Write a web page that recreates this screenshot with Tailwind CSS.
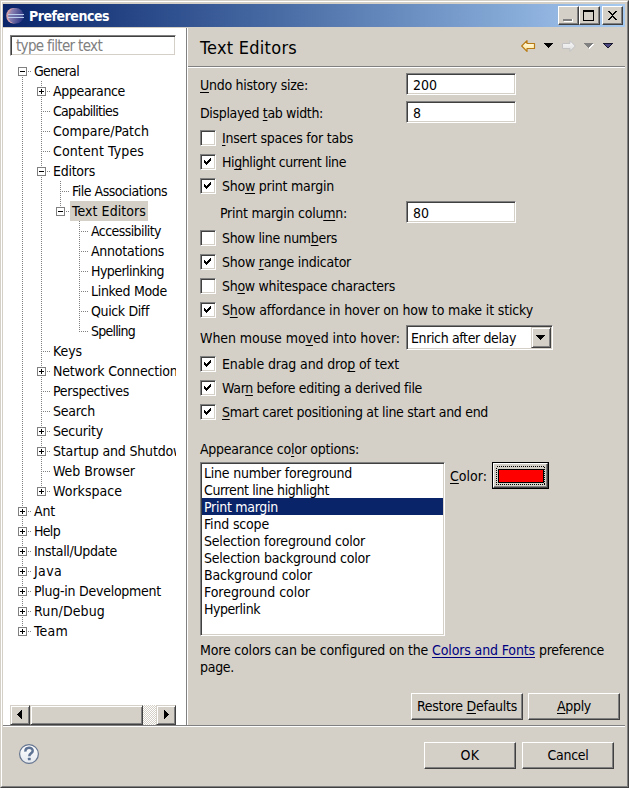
<!DOCTYPE html>
<html lang="en">
<head>
<meta charset="utf-8">
<title>Preferences</title>
<script src="https://cdn.jsdelivr.net/npm/@tailwindcss/browser@4"></script>
</head>
<body class="w-[629px] h-[788px] overflow-hidden bg-[#d4d0c8] text-black text-[14px] leading-[17px] font-['DejaVu_Sans_Condensed','DejaVu_Sans',sans-serif] [font-stretch:condensed]">
<div class="w-[629px] h-[788px] border border-t-[#d4d0c8] border-l-[#d4d0c8] border-r-[#404040] border-b-[#404040]">
<div class="h-full border border-t-white border-l-white border-r-[#808080] border-b-[#808080] pt-[2px] pl-px pr-[2px] flex flex-col">

  <!-- Title bar -->
  <header class="h-[23px] shrink-0 flex items-center bg-linear-to-r from-[#0a246a] to-[#a6caf0] pl-[3px] pr-[2px]">
    <svg width="18" height="18" viewBox="0 0 18 18" class="shrink-0">
      <defs><linearGradient id="ecl" x1="0" y1="0" x2="1" y2="0.3"><stop offset="0" stop-color="#d99a9f"/><stop offset=".3" stop-color="#8a80b0"/><stop offset="1" stop-color="#303a86"/></linearGradient></defs>
      <ellipse cx="7.5" cy="8.7" rx="7.3" ry="7.8" fill="#d3a3ae"/>
      <circle cx="9.8" cy="8.7" r="7.8" fill="url(#ecl)"/>
      <path d="M2 7.5H18M2 10.5H18" stroke="#b9cdee" stroke-width="1.2"/>
      <path d="M2.5 9H17" stroke="#6a72aa" stroke-width="1"/>
    </svg>
    <span class="ml-[5px] pt-[2px] font-bold text-white whitespace-nowrap" data-w="80">Preferences</span>
    <div class="ml-auto flex h-[19px]">
      <div class="w-[21px] border border-t-white border-l-white border-r-[#404040] border-b-[#404040] bg-[#d4d0c8] shadow-[inset_-1px_-1px_#808080]">
        <svg width="19" height="17" shape-rendering="crispEdges"><path d="M5 14H13V12H14V15H5Z" fill="#fff"/><rect x="4" y="12" width="9" height="2" fill="#808080"/></svg>
      </div>
      <div class="w-[21px] border border-t-white border-l-white border-r-[#404040] border-b-[#404040] bg-[#d4d0c8] shadow-[inset_-1px_-1px_#808080]">
        <svg width="19" height="17" shape-rendering="crispEdges"><path d="M3 3H14V14H3ZM4 5V13H13V5Z" fill-rule="evenodd"/></svg>
      </div>
      <div class="ml-[2px] w-[21px] border border-t-white border-l-white border-r-[#404040] border-b-[#404040] bg-[#d4d0c8] shadow-[inset_-1px_-1px_#808080]">
        <svg width="19" height="17" shape-rendering="crispEdges"><path d="M5 4h2v1h1v1h1v1h1v-1h1v-1h1v-1h2v1h-1v1h-1v1h-1v1h-1v1h1v1h1v1h1v1h1v1h-2v-1h-1v-1h-1v-1h-1v1h-1v1h-1v1h-2v-1h1v-1h1v-1h1v-1h1v-1h-1v-1h-1v-1h-1v-1h-1z"/></svg>
      </div>
    </div>
  </header>

  <main class="mt-px h-[697px] shrink-0 flex">
    <!-- Page tree -->
    <aside class="w-[183px] shrink-0 bg-white pl-[7px] pt-[7px] flex flex-col">
      <div class="w-[166px] h-[21px] border border-t-[#808080] border-l-[#808080] border-r-white border-b-white shadow-[inset_1px_1px_#404040,inset_-1px_-1px_#d4d0c8] pl-[5px] pt-[2px] flex items-center text-[15px] text-[#808080]">
        <span class="whitespace-nowrap" data-w="86">type filter text</span>
      </div>
      <div id="tree" class="mt-[5px] w-[166px] h-[644px] overflow-hidden"></div>
      <div class="w-[166px] h-[20px] flex">
        <div class="w-[20px] border border-t-[#d4d0c8] border-l-[#d4d0c8] border-r-[#404040] border-b-[#404040] bg-[#d4d0c8] shadow-[inset_1px_1px_white,inset_-1px_-1px_#808080]">
          <svg width="18" height="18" shape-rendering="crispEdges"><path d="M10 4h1v9h-1zM9 5h1v7h-1zM8 6h1v5h-1zM7 7h1v3h-1zM6 8h1v1h-1z"/></svg>
        </div>
        <div class="w-[113px] border border-t-[#d4d0c8] border-l-[#d4d0c8] border-r-[#404040] border-b-[#404040] bg-[#d4d0c8] shadow-[inset_1px_1px_white,inset_-1px_-1px_#808080]"></div>
        <div class="w-[13px] bg-[repeating-conic-gradient(#d4d0c8_0_25%,#ffffff_0_50%)] bg-[length:2px_2px]"></div>
        <div class="w-[20px] border border-t-[#d4d0c8] border-l-[#d4d0c8] border-r-[#404040] border-b-[#404040] bg-[#d4d0c8] shadow-[inset_1px_1px_white,inset_-1px_-1px_#808080]">
          <svg width="18" height="18" shape-rendering="crispEdges"><path d="M7 4h1v9h-1zM8 5h1v7h-1zM9 6h1v5h-1zM10 7h1v3h-1zM11 8h1v1h-1z"/></svg>
        </div>
      </div>
    </aside>
    <div class="w-px bg-[#808080]"></div>
    <div class="w-px bg-white"></div>

    <!-- Text Editors page -->
    <section class="flex-1 flex flex-col whitespace-nowrap">
      <div class="h-[40px] shrink-0 border-b border-white">
        <div class="h-[39px] border-b border-[#808080] pl-[12px] flex items-center">
          <h1 class="pt-[2px] text-[18px] leading-[22px]"><span data-w="97">Text Editors</span></h1>
          <svg class="ml-auto mr-[10px]" width="95" height="16" viewBox="0 0 95 16">
            <defs>
              <linearGradient id="gold" x1="0" y1="0" x2="0" y2="1"><stop offset="0" stop-color="#fffef0"/><stop offset="1" stop-color="#ffe596"/></linearGradient>
              <linearGradient id="pale" x1="0" y1="0" x2="0" y2="1"><stop offset="0" stop-color="#fafafa"/><stop offset="1" stop-color="#dedede"/></linearGradient>
            </defs>
            <path d="M1.7 7 7 1.6V4.5H14.5V9.5H7V12.4Z" fill="url(#gold)" stroke="#b87a14" stroke-width="1.2" stroke-linejoin="round"/>
            <path d="M55.3 7 50 1.6V4.5H42.5V9.5H50V12.4Z" fill="url(#pale)" stroke="#c2c2c2" stroke-linejoin="round"/>
            <g shape-rendering="crispEdges">
              <path d="M24 4h9v1h-1v1h-1v1h-1v1h-1v1h-1v-1h-1v-1h-1v-1h-1v-1h-1z"/>
              <path d="M65 5h9v1h-1v1h-1v1h-1v1h-1v1h-1v-1h-1v-1h-1v-1h-1v-1h-1z" fill="#fff"/>
              <path d="M64 4h9v1h-1v1h-1v1h-1v1h-1v1h-1v-1h-1v-1h-1v-1h-1v-1h-1z" fill="#808080"/>
              <path d="M83 4h10v1h-1v1h-1v1h-1v1h-1v1h-2v-1h-1v-1h-1v-1h-1v-1h-1z" fill="#17172e"/>
              <path d="M85 5h6v1h-1v1h-1v1h-2v-1h-1v-1h-1z" fill="#4b4680"/>
            </g>
          </svg>
        </div>
      </div>

      <div class="pl-[12px] pt-[5px] flex flex-col">
        <div class="h-[22px] flex items-center">
          <label class="pt-[2px] w-[206px]"><span data-w="108"><u>U</u>ndo history size:</span></label>
          <div class="w-[110px] h-[22px] bg-white border border-t-[#808080] border-l-[#808080] border-r-white border-b-white shadow-[inset_1px_1px_#404040,inset_-1px_-1px_#d4d0c8] pl-[6px] pt-[2px] flex items-center"><span data-w="24">200</span></div>
        </div>
        <div class="mt-[6px] h-[22px] flex items-center">
          <label class="pt-[2px] w-[206px]"><span data-w="123">Displayed <u>t</u>ab width:</span></label>
          <div class="w-[110px] h-[22px] bg-white border border-t-[#808080] border-l-[#808080] border-r-white border-b-white shadow-[inset_1px_1px_#404040,inset_-1px_-1px_#d4d0c8] pl-[6px] pt-[2px] flex items-center"><span data-w="8">8</span></div>
        </div>
        <div class="mt-[3px] h-[24px] flex items-center gap-[6px]"><i class="check"></i><span data-w="131"><u>I</u>nsert spaces for tabs</span></div>
        <div class="h-[24px] flex items-center gap-[6px]"><i class="check on"></i><span data-w="124">Hi<u>g</u>hlight current line</span></div>
        <div class="h-[24px] flex items-center gap-[6px]"><i class="check on"></i><span data-w="112">Sho<u>w</u> print margin</span></div>
        <div class="mt-[3px] h-[22px] flex items-center">
          <label class="pl-[20px] pt-[2px] w-[206px]"><span data-w="127">Print margin colu<u>m</u>n:</span></label>
          <div class="w-[110px] h-[22px] bg-white border border-t-[#808080] border-l-[#808080] border-r-white border-b-white shadow-[inset_1px_1px_#404040,inset_-1px_-1px_#d4d0c8] pl-[6px] pt-[2px] flex items-center"><span data-w="16">80</span></div>
        </div>
        <div class="mt-[3px] h-[24px] flex items-center gap-[6px]"><i class="check"></i><span data-w="115">Show line num<u>b</u>ers</span></div>
        <div class="h-[24px] flex items-center gap-[6px]"><i class="check on"></i><span data-w="129">Show <u>r</u>ange indicator</span></div>
        <div class="h-[24px] flex items-center gap-[6px]"><i class="check"></i><span data-w="173">Sh<u>o</u>w whitespace characters</span></div>
        <div class="h-[24px] flex items-center gap-[6px]"><i class="check on"></i><span data-w="311">S<u>h</u>ow affordance in hover on how to make it sticky</span></div>
        <div class="mt-[3px] h-[25px] flex items-center">
          <label class="pt-[2px] w-[206px]"><span data-w="200">When mouse mo<u>v</u>ed into hover:</span></label>
          <div class="w-[147px] h-[25px] bg-white border border-t-[#808080] border-l-[#808080] border-r-white border-b-white shadow-[inset_1px_1px_#404040,inset_-1px_-1px_#d4d0c8] pl-[4px] pr-px flex items-center justify-between">
            <span class="pt-[2px]" data-w="105">Enrich after delay</span>
            <div class="w-[20px] h-[21px] border border-t-[#d4d0c8] border-l-[#d4d0c8] border-r-[#404040] border-b-[#404040] bg-[#d4d0c8] shadow-[inset_1px_1px_white,inset_-1px_-1px_#808080]">
              <svg width="18" height="19" shape-rendering="crispEdges"><path d="M4 7h9v1h-1v1h-1v1h-1v1h-1v1h-1v-1h-1v-1h-1v-1h-1v-1h-1z"/></svg>
            </div>
          </div>
        </div>
        <div class="mt-[2px] h-[24px] flex items-center gap-[6px]"><i class="check on"></i><span data-w="177">Enable drag and dro<u>p</u> of text</span></div>
        <div class="h-[24px] flex items-center gap-[6px]"><i class="check on"></i><span data-w="200">War<u>n</u> before editing a derived file</span></div>
        <div class="h-[24px] flex items-center gap-[6px]"><i class="check on"></i><span data-w="266"><u>S</u>mart caret positioning at line start and end</span></div>

        <div class="mt-[16px] h-[18px] flex items-center"><span data-w="159">Appearance co<u>l</u>or options:</span></div>
        <div class="mt-[4px] flex items-start">
          <div class="w-[245px] h-[174px] bg-white border border-t-[#808080] border-l-[#808080] border-r-white border-b-white shadow-[inset_1px_1px_#404040,inset_-1px_-1px_#d4d0c8] px-px pt-px leading-[19px]">
            <div class="h-[17px] pl-[2px] flex"><span data-w="148">Line number foreground</span></div>
            <div class="h-[17px] pl-[2px] flex"><span data-w="125">Current line highlight</span></div>
            <div class="h-[17px] pl-[2px] flex bg-[#0a246a] text-white"><span data-w="74">Print margin</span></div>
            <div class="h-[17px] pl-[2px] flex"><span data-w="65">Find scope</span></div>
            <div class="h-[17px] pl-[2px] flex"><span data-w="161">Selection foreground color</span></div>
            <div class="h-[17px] pl-[2px] flex"><span data-w="166">Selection background color</span></div>
            <div class="h-[17px] pl-[2px] flex"><span data-w="108">Background color</span></div>
            <div class="h-[17px] pl-[2px] flex"><span data-w="106">Foreground color</span></div>
            <div class="h-[17px] pl-[2px] flex"><span data-w="56">Hyperlink</span></div>
          </div>
          <div class="ml-[5px] w-[42px] h-[28px] flex items-center"><span data-w="37"><u>C</u>olor:</span></div>
          <div class="w-[57px] h-[27px] border border-black">
            <div class="h-full border border-t-white border-l-white border-r-[#404040] border-b-[#404040] shadow-[inset_-1px_-1px_#808080]">
              <svg width="53" height="23" shape-rendering="crispEdges">
                <rect x="2.5" y="2.5" width="48" height="18" fill="none" stroke="#000" stroke-dasharray="1 1"/>
                <rect x="4.5" y="5.5" width="45" height="13" fill="#f00" stroke="#000"/>
              </svg>
            </div>
          </div>
        </div>
        <div class="mt-[6px] flex whitespace-pre"><span data-w="232">More colors can be configured on the </span><span class="text-[#00007f] underline underline-offset-2 decoration-1" data-w="103">Colors and Fonts</span><span class="ml-[4px]" data-w="65">preference</span></div>
        <div class="flex"><span data-w="34">page.</span></div>
        <div class="mt-[17px] pl-[211px] flex gap-[5px]">
          <div class="w-[112px] h-[27px] border border-t-white border-l-white border-r-[#404040] border-b-[#404040] shadow-[inset_-1px_-1px_#808080] flex items-center justify-center"><span data-w="100">Restore <u>D</u>efaults</span></div>
          <div class="w-[92px] h-[27px] border border-t-white border-l-white border-r-[#404040] border-b-[#404040] shadow-[inset_-1px_-1px_#808080] flex items-center justify-center"><span data-w="34"><u>A</u>pply</span></div>
        </div>
      </div>
    </section>
  </main>

  <!-- Dialog buttons -->
  <footer class="border-t border-[#808080]">
    <div class="border-t border-white pl-[15px] pt-[15px] flex items-start">
      <svg class="mt-[1px]" width="22" height="22" viewBox="0 0 22 22">
        <defs><linearGradient id="hb" x1="0" y1="0" x2="0" y2="1"><stop offset="0" stop-color="#ffffff"/><stop offset="1" stop-color="#e4e8ee"/></linearGradient></defs>
        <circle cx="11" cy="11" r="9.4" fill="url(#hb)" stroke="#64748f" stroke-width="1.2"/>
        <path d="M7.4 8.6C7.2 3.6 14.8 3.7 14.7 7.9C14.6 10.3 11.3 10.4 11.3 13.2" fill="none" stroke="#5f7394" stroke-width="2.5"/>
        <rect x="9.9" y="14.7" width="2.8" height="2.6" rx=".6" fill="#5f7394"/>
      </svg>
      <div class="ml-auto mr-[11px] flex gap-[6px]">
        <div class="w-[92px] h-[27px] border border-t-white border-l-white border-r-[#404040] border-b-[#404040] shadow-[inset_-1px_-1px_#808080] flex items-center justify-center"><span data-w="19">OK</span></div>
        <div class="w-[92px] h-[27px] border border-t-white border-l-white border-r-[#404040] border-b-[#404040] shadow-[inset_-1px_-1px_#808080] flex items-center justify-center"><span data-w="41">Cancel</span></div>
      </div>
    </div>
  </footer>
</div>
</div>

<script>
// Tree rows: [level, expander, label, label width]
const rows = [
  [0,'-','General',45],[1,'+','Appearance',72],[1,'','Capabilities',65],[1,'','Compare/Patch',96],[1,'','Content Types',91],
  [1,'-','Editors',42],[2,'','File Associations',95],[2,'-','Text Editors',74],[3,'','Accessibility',70],[3,'','Annotations',73],
  [3,'','Hyperlinking',73],[3,'','Linked Mode',76],[3,'','Quick Diff',58],[3,'','Spelling',44],[1,'','Keys',29],
  [1,'+','Network Connections',131],[1,'','Perspectives',76],[1,'','Search',42],[1,'+','Security',50],[1,'+','Startup and Shutdown',138],
  [1,'','Web Browser',82],[1,'+','Workspace',69],[0,'+','Ant',21],[0,'+','Help',26],[0,'+','Install/Update',83],
  [0,'+','Java',28],[0,'+','Plug-in Development',127],[0,'+','Run/Debug',71],[0,'+','Team',34]
];
// True when another row of this level follows before its parent closes
const continues = (i, level) => {
  for (let j = i + 1; j < rows.length; j++) {
    if (rows[j][0] < level) return false;
    if (rows[j][0] === level) return true;
  }
  return false;
};
document.getElementById('tree').innerHTML = rows.map(([level, box, label, w], i) => {
  const width = 22 + 19 * level, cx = 12 + 19 * level;
  let s = '';
  const dot = (x1, y1, x2, y2) => { s += `<path d="M${x1} ${y1}L${x2} ${y2}" stroke="#808080" stroke-dasharray="1 1"/>`; };
  for (let l = 0; l < level; l++) if (continues(i, l)) dot(12.5 + 19 * l, 0, 12.5 + 19 * l, 20);
  if (i) dot(cx + .5, 0, cx + .5, 10);
  if (continues(i, level)) dot(cx + .5, 10, cx + .5, 20);
  dot(cx, 10.5, cx + 9, 10.5);
  if (box) {
    s += `<rect x="${cx - 3.5}" y="6.5" width="8" height="8" fill="#fff" stroke="#808080"/><path d="M${cx - 2} 10.5h5" stroke="#000"/>`;
    if (box === '+') s += `<path d="M${cx + .5} 8v5" stroke="#000"/>`;
  }
  const sel = label === 'Text Editors' ? 'bg-[#d4d0c8] pl-[2px] pr-[2px]' : 'pl-[2px]';
  return `<div class="h-[20px] flex whitespace-nowrap"><svg class="shrink-0" width="${width}" height="20" shape-rendering="crispEdges">${s}</svg><div class="h-[20px] shrink-0 leading-[20px] ${sel}"><span data-w="${w}">${label}</span></div></div>`;
}).join('');

document.querySelectorAll('.check').forEach(c => {
  c.className += ' w-[16px] h-[16px] shrink-0 bg-white border border-t-[#808080] border-l-[#808080] border-r-white border-b-white shadow-[inset_1px_1px_#404040,inset_-1px_-1px_#d4d0c8]';
  if (c.classList.contains('on')) c.innerHTML = '<svg width="14" height="14" shape-rendering="crispEdges"><path d="M3 5h1v1h1v1h1v-1h1v-1h1v-1h1v-1h1v3h-1v1h-1v1h-1v1h-1v1h-1v-1h-1v-1h-1z"/></svg>';
});
document.querySelectorAll('u').forEach(u => { u.className = 'underline decoration-1 underline-offset-2 [text-decoration-skip-ink:none]'; });

// Spread each label over its set width once styles apply
function fit() {
  document.querySelectorAll('[data-w]').forEach(el => {
    let gap = 0;
    el.style.letterSpacing = '0px';
    for (let k = 0; k < 4; k++) {
      gap += (el.dataset.w - el.getBoundingClientRect().width) / el.textContent.length;
      el.style.letterSpacing = gap.toFixed(3) + 'px';
    }
  });
}
window.addEventListener('load', () => { fit(); requestAnimationFrame(fit); setTimeout(fit, 50); });
</script>
</body>
</html>
